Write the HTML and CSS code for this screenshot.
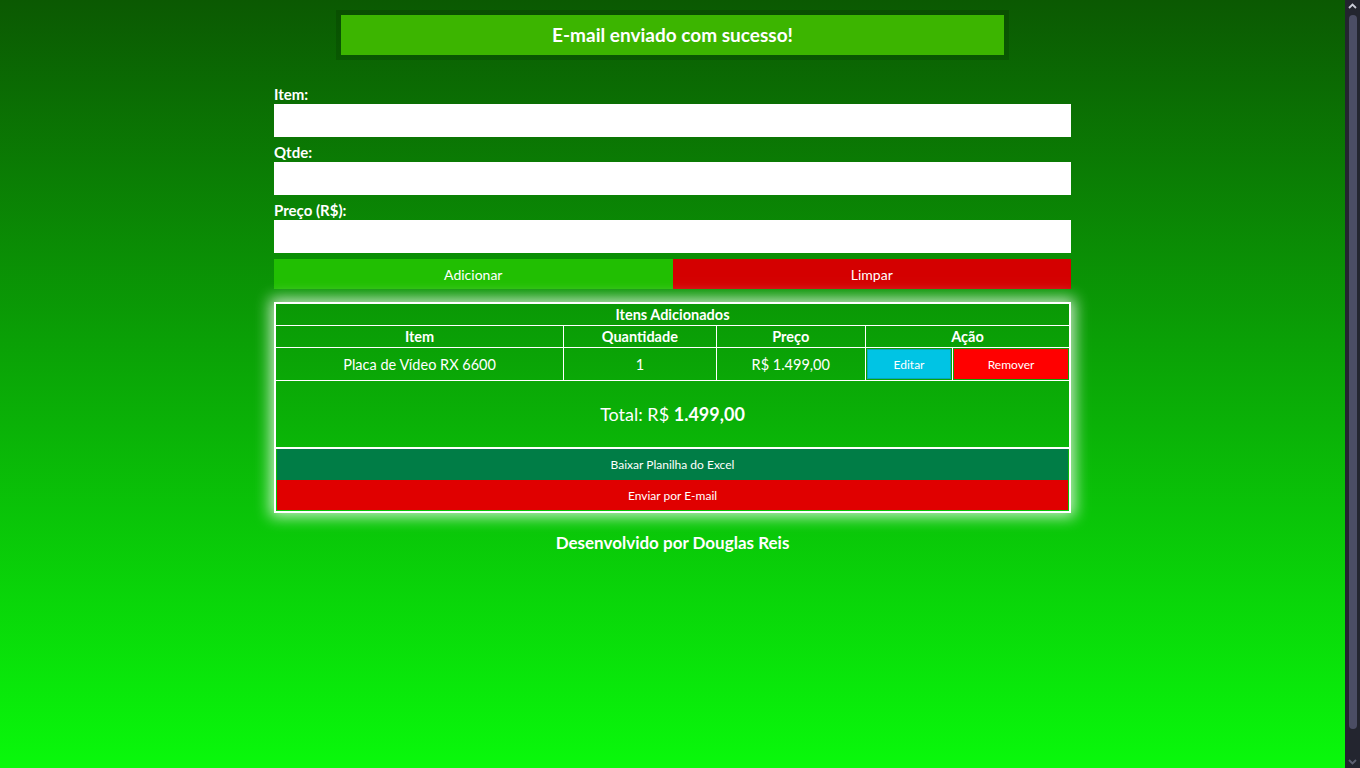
FILE: index.html
```html
<!DOCTYPE html>
<html lang="pt-BR">
<head>
<meta charset="utf-8">
<title>Lista de Compras</title>
<link rel="stylesheet" href="styles.css">
</head>
<body>
<div class="page">
  <div class="toast">E-mail enviado com sucesso!</div>
  <form class="form">
    <label class="lbl" for="item">Item:</label>
    <input class="inp" id="item" type="text">
    <label class="lbl" for="qtde">Qtde:</label>
    <input class="inp" id="qtde" type="text">
    <label class="lbl" for="preco">Preço (R$):</label>
    <input class="inp" id="preco" type="text">
    <div class="actions">
      <button type="button" class="btn btn-add">Adicionar</button>
      <button type="button" class="btn btn-clear">Limpar</button>
    </div>
  </form>
  <table class="tbl">
    <colgroup>
      <col class="c-item"><col class="c-qty"><col class="c-price"><col class="c-act-a"><col class="c-act-b">
    </colgroup>
    <thead>
      <tr><th colspan="5" class="cap">Itens Adicionados</th></tr>
      <tr><th>Item</th><th>Quantidade</th><th>Preço</th><th colspan="2">Ação</th></tr>
    </thead>
    <tbody>
      <tr class="row">
        <td>Placa de Vídeo RX 6600</td>
        <td>1</td>
        <td>R$ 1.499,00</td>
        <td class="cell-btn"><button type="button" class="sbtn edit">Editar</button></td>
        <td class="cell-btn"><button type="button" class="sbtn remove">Remover</button></td>
      </tr>
      <tr><td colspan="5" class="total">Total: R$ <b>1.499,00</b></td></tr>
    </tbody>
    <tfoot>
      <tr><td colspan="5" class="foot">
        <button type="button" class="wbtn excel">Baixar Planilha do Excel</button>
        <button type="button" class="wbtn mail">Enviar por E-mail</button>
      </td></tr>
    </tfoot>
  </table>
  <p class="credit">Desenvolvido por Douglas Reis</p>
</div>
<div class="scrollbar" aria-hidden="true">
  <svg class="arrow" width="15" height="12" viewBox="0 0 15 12"><path d="M4 8 L7.5 4.5 L11 8" fill="none" stroke="#c9cad6" stroke-width="1.8"/></svg>
  <div class="thumb"></div>
  <svg class="arrow" width="15" height="12" viewBox="0 0 15 12"><path d="M4 4 L7.5 7.5 L11 4" fill="none" stroke="#5d6072" stroke-width="1.8"/></svg>
</div>
</body>
</html>
```
FILE: styles.css
```css
html {
  background: linear-gradient(to bottom, #0b5902 0%, #09f90b 100%);
  min-height: 100%;
}
body {
  margin: 0;
  padding-right: 15px;
  min-height: 100vh;
  font-family: Lato, "Open Sans", sans-serif;
  color: #ffffff;
}
.page {
  width: 797px;
  margin: 0 auto;
  padding-top: 10px;
  display: flex;
  flex-direction: column;
}
.toast {
  align-self: center;
  width: 663px;
  height: 40px;
  line-height: 40px;
  background: #3cb500;
  background-clip: padding-box;
  border: 5px solid rgba(0, 0, 0, 0.12);
  text-align: center;
  font-size: 19px;
  font-weight: 700;
  box-sizing: content-box;
}
.form {
  display: flex;
  flex-direction: column;
  margin-top: 25px;
}
.lbl {
  font-size: 15px;
  font-weight: 700;
  line-height: 19px;
  margin-top: 6px;
}
.lbl:first-child { margin-top: 0; }
.inp {
  height: 33px;
  border: 0;
  padding: 0 8px;
  margin: 0;
  background: #ffffff;
  font-family: inherit;
  font-size: 15px;
  box-sizing: border-box;
}
.actions {
  display: flex;
  margin-top: 6px;
}
.btn {
  flex: 1;
  height: 30px;
  border: 0;
  margin: 0;
  color: #ffffff;
  font-family: inherit;
  font-size: 14px;
}
.btn-add { background: #21bf02; }
.btn-clear { background: #d40000; }
.tbl {
  margin-top: 13px;
  width: 797px;
  border-collapse: collapse;
  border: 2px solid #ffffff;
  box-shadow: 0 0 14px 4px rgba(255, 255, 255, 0.75);
  table-layout: fixed;
  font-size: 14.5px;
}
.c-item { width: 288px; }
.c-qty { width: 152px; }
.c-price { width: 149px; }
.c-act-a { width: 87px; }
.c-act-b { width: 117px; }
.tbl th, .tbl td {
  border: 1px solid #ffffff;
  text-align: center;
  padding: 0;
}
.tbl th {
  font-weight: 700;
  height: 21px;
  line-height: 20px;
}
.tbl .row td { height: 30px; padding: 1px; }
.sbtn {
  display: block;
  width: 100%;
  height: 30px;
  margin: 0;
  color: #ffffff;
  font-family: inherit;
  font-size: 12px;
}
.edit { background: #00c4e4; border: 1px solid #08a6b8; }
.remove { background: #ff0000; border: 0; }
.total {
  height: 66px;
  font-size: 18px;
}
.total b { font-weight: 700; }
.tbl .foot {
  padding: 0 1px 1px;
  border-top: 2px solid #ffffff;
}
.wbtn {
  display: block;
  width: 100%;
  height: 30px;
  border: 0;
  margin: 0;
  color: #ffffff;
  font-family: inherit;
  font-size: 12px;
}
.excel { background: #007d46; height: 31px; }
.mail { background: #e00000; }
.credit {
  margin: 19px 0 0;
  text-align: center;
  font-size: 17px;
  font-weight: 700;
  line-height: 22px;
}
.scrollbar {
  position: fixed;
  top: 0;
  right: 0;
  width: 15px;
  height: 100vh;
  background: #23252f;
  display: flex;
  flex-direction: column;
  align-items: center;
}
.arrow { flex: none; display: block; }
.thumb {
  flex: 1;
  width: 8px;
  margin: 3px 0 27px;
  background: #4b4d64;
  border-radius: 4px;
}
```
